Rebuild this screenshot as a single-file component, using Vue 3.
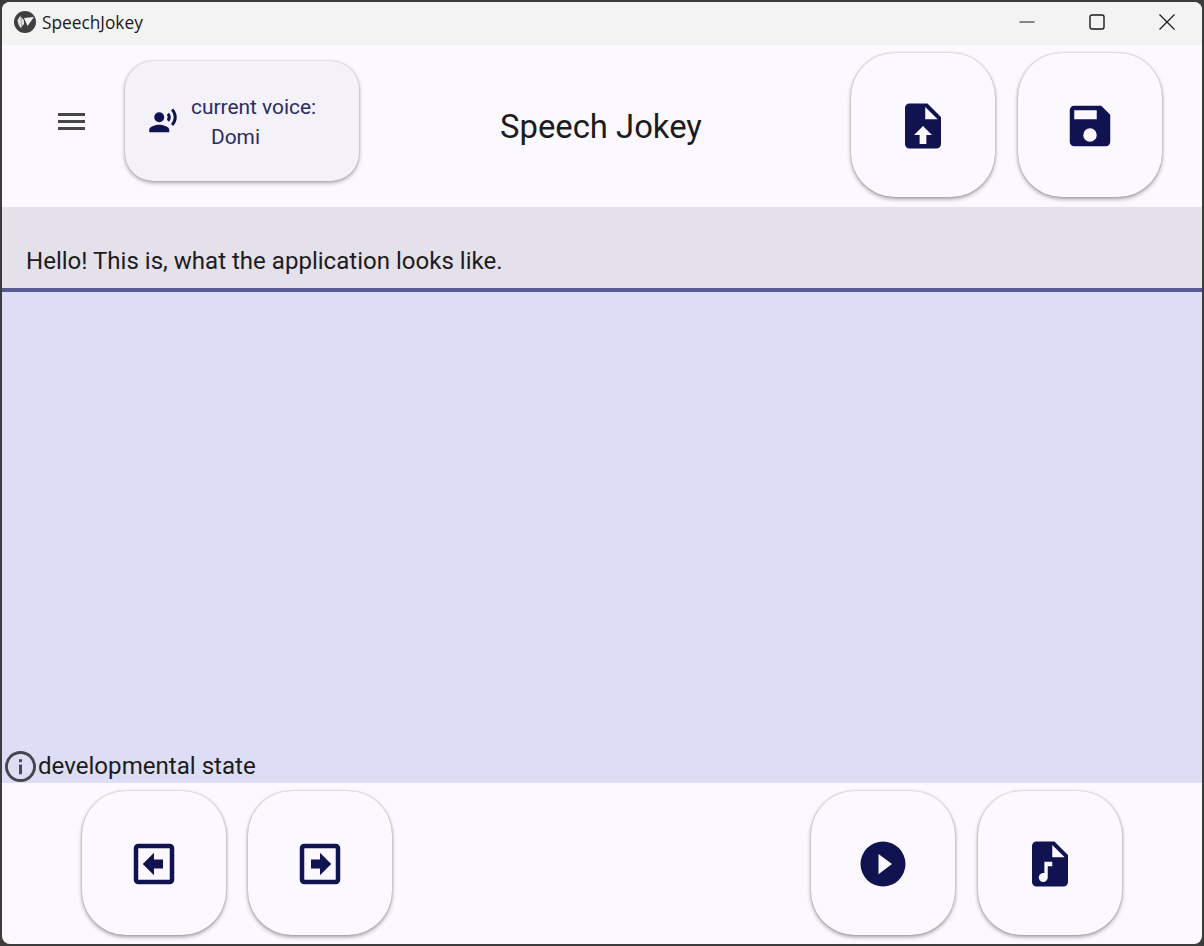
<script setup>
const icons = {
  voice: 'M9,5A4,4 0 0,1 13,9A4,4 0 0,1 9,13A4,4 0 0,1 5,9A4,4 0 0,1 9,5M9,15C11.67,15 17,16.34 17,19V21H1V19C1,16.34 6.33,15 9,15M16.76,5.36C18.78,7.56 18.78,10.61 16.76,12.63L15.08,10.94C15.92,9.76 15.92,8.23 15.08,7.05L16.76,5.36M20.07,2C24,6.05 23.97,12.11 20.07,16L18.44,14.37C21.21,11.19 21.21,6.65 18.44,3.63L20.07,2Z',
  upload: 'M14,2H6A2,2 0 0,0 4,4V20A2,2 0 0,0 6,22H18A2,2 0 0,0 20,20V8L14,2M13,3.5L18.5,9H13V3.5M12,12L16,16H13.5V20H10.5V16H8L12,12Z',
  save: 'M17,3H5C3.89,3 3,3.9 3,5V19A2,2 0 0,0 5,21H19A2,2 0 0,0 21,19V7L17,3M5,5H15V9H5V5M12,13A3,3 0 0,1 15,16A3,3 0 0,1 12,19A3,3 0 0,1 9,16A3,3 0 0,1 12,13Z',
  left: 'M19,3H5A2,2 0 0,0 3,5V19A2,2 0 0,0 5,21H19A2,2 0 0,0 21,19V5A2,2 0 0,0 19,3M19,19H5V5H19V19M7,12L12,7V10H16V14H12V17L7,12Z',
  right: 'M5,3H19A2,2 0 0,1 21,5V19A2,2 0 0,1 19,21H5A2,2 0 0,1 3,19V5A2,2 0 0,1 5,3M5,19H19V5H5V19M17,12L12,7V10H8V14H12V17L17,12Z',
  play: 'M12,2A10,10 0 0,0 2,12A10,10 0 0,0 12,22A10,10 0 0,0 22,12A10,10 0 0,0 12,2M10,7.5L16,12L10,16.5V7.5Z',
  music: 'M14,2H6A2,2 0 0,0 4,4V20A2,2 0 0,0 6,22H18A2,2 0 0,0 20,20V8L14,2M13,3.5L18.5,9H13V3.5M13,11H9.5V16.05A2,2 0 1,0 11,18V13H13V11Z'
}
const topButtons = [icons.upload, icons.save]
const leftButtons = [icons.left, icons.right]
const rightButtons = [icons.play, icons.music]
</script>

<template>
  <div class="desktop">
    <div class="window">
      <header class="titlebar">
        <svg class="logo" viewBox="0 0 22 22">
          <circle cx="11" cy="11" r="11" fill="#3f3f3f" />
          <path d="M3.5 9.5 L6 5 L9.8 9 L10 13 L6.5 17 L4.5 13.5 Z" fill="#e8e8e8" />
          <path d="M7 6 L7.5 15.5" stroke="#8a8a8a" stroke-width=".8" fill="none" />
          <path d="M10 7 L20 6 L13.5 15 Z" fill="#f2f2f2" />
        </svg>
        <span class="app-name">SpeechJokey</span>
        <div class="controls">
          <svg class="ctl" viewBox="0 0 16 16"><path d="M0.5 8H15.5" /></svg>
          <svg class="ctl" viewBox="0 0 16 16"><rect x="1" y="1" width="14" height="14" rx="2" stroke-width="1.4" /></svg>
          <svg class="ctl" viewBox="0 0 16 16"><path d="M0.5 0.5L15.5 15.5M15.5 0.5L0.5 15.5" /></svg>
        </div>
      </header>

      <section class="topbar">
        <div class="menu"><span></span><span></span><span></span></div>
        <div class="voice-card">
          <svg class="voice-icon" viewBox="0 0 24 24"><path :d="icons.voice" /></svg>
          <div class="voice-text">
            <div>current voice:</div>
            <div class="voice-name">Domi</div>
          </div>
        </div>
        <h1 class="title">Speech Jokey</h1>
        <div class="top-actions">
          <button v-for="(d, i) in topButtons" :key="i" class="fab">
            <svg viewBox="0 0 24 24"><path :d="d" fill-rule="evenodd" /></svg>
          </button>
        </div>
      </section>

      <section class="input"><span>Hello! This is, what the application looks like.</span></section>

      <main class="canvas">
        <div class="status">
          <svg class="info" viewBox="0 0 32 32">
            <circle cx="16" cy="16" r="14.5" />
            <rect x="14.5" y="14" width="3" height="10" />
            <rect x="14.5" y="8.5" width="3" height="3" />
          </svg>
          <span>developmental state</span>
        </div>
      </main>

      <footer class="bottombar">
        <div class="group">
          <button v-for="(d, i) in leftButtons" :key="i" class="fab">
            <svg viewBox="0 0 24 24"><path :d="d" fill-rule="evenodd" /></svg>
          </button>
        </div>
        <div class="group group-wide">
          <button v-for="(d, i) in rightButtons" :key="i" class="fab">
            <svg viewBox="0 0 24 24"><path :d="d" fill-rule="evenodd" /></svg>
          </button>
        </div>
      </footer>
    </div>
  </div>
</template>

<style>
html, body { margin: 0; background: #3a3a3a; }
</style>

<style scoped>
.desktop {
  width: 1204px;
  height: 946px;
  box-sizing: border-box;
  padding: 2px;
  background: #3c3c3c;
  overflow: hidden;
  font-family: Roboto, "Liberation Sans", sans-serif;
}
.window {
  height: 942px;
  display: flex;
  flex-direction: column;
  border-radius: 8px;
  overflow: hidden;
  background: #fbf8ff;
}
.titlebar {
  height: 43px;
  flex: none;
  box-sizing: border-box;
  padding: 0 0 3px 12px;
  display: flex;
  align-items: center;
  background: #f3f3f3;
}
.logo { width: 22px; height: 22px; margin-right: 6px; }
.app-name {
  font-family: "Open Sans", sans-serif;
  font-size: 17.3px;
  color: #1a1a1a;
}
.controls { margin-left: auto; display: flex; align-items: center; }
.ctl {
  width: 16px;
  height: 16px;
  margin: 0 27px;
  fill: none;
  stroke: #1a1a1a;
  stroke-width: 1.2;
}
.topbar {
  height: 162px;
  flex: none;
  display: flex;
  align-items: center;
  position: relative;
}
.menu {
  width: 27px;
  margin: 0 0 9px 56px;
  display: flex;
  flex-direction: column;
  gap: 4px;
}
.menu span { height: 3px; background: #47464f; }
.voice-card {
  width: 234px;
  height: 120px;
  margin: 0 0 10px 40px;
  box-sizing: border-box;
  padding-left: 23px;
  display: flex;
  align-items: center;
  border-radius: 28px;
  background: #f4f1f9;
  box-shadow: 0 2px 4px rgba(0, 0, 0, .32), 0 0 2px rgba(0, 0, 0, .22);
}
.voice-icon { width: 30px; height: 30px; fill: #10134f; flex: none; }
.voice-text {
  margin: 2px 0 0 13px;
  font-size: 20.9px;
  line-height: 30px;
  font-weight: 400;
  color: #2a2c66;
}
.voice-name { padding-left: 20px; }
.title {
  position: absolute;
  left: 498px;
  top: 60px;
  margin: 0;
  font-size: 32.8px;
  line-height: 44px;
  font-weight: 400;
  color: #1c1b20;
}
.top-actions { margin: 0 40px 2px auto; display: flex; gap: 23px; }
.fab {
  width: 144px;
  height: 144px;
  padding: 1px 0 0;
  border: 0;
  border-radius: 44px;
  background: #fbf8ff;
  box-shadow: 0 2px 4px rgba(0, 0, 0, .36), 0 0 2px rgba(0, 0, 0, .24);
  display: flex;
  align-items: center;
  justify-content: center;
}
.fab svg { width: 54px; height: 54px; fill: #10134f; }
.input {
  height: 85px;
  flex: none;
  box-sizing: border-box;
  background: #e5e1ea;
  border-bottom: 4px solid #555a92;
  padding: 39px 0 0 24px;
  font-size: 24.05px;
  line-height: 30px;
  color: #1c1b20;
}
.canvas {
  flex: 1;
  background: #dddef5;
  display: flex;
  align-items: flex-end;
}
.status {
  display: flex;
  align-items: center;
  font-size: 24.1px;
  line-height: 34px;
  color: #1c1b20;
}
.info { width: 31px; height: 31px; margin: 0 2px 0 3px; fill: #47464f; }
.info circle { fill: none; stroke: #47464f; stroke-width: 3; }
.bottombar {
  height: 161px;
  flex: none;
  box-sizing: border-box;
  padding: 0 80px 1px;
  display: flex;
  justify-content: space-between;
  align-items: center;
}
.group { display: flex; gap: 22px; }
.group-wide { gap: 23px; }
</style>
